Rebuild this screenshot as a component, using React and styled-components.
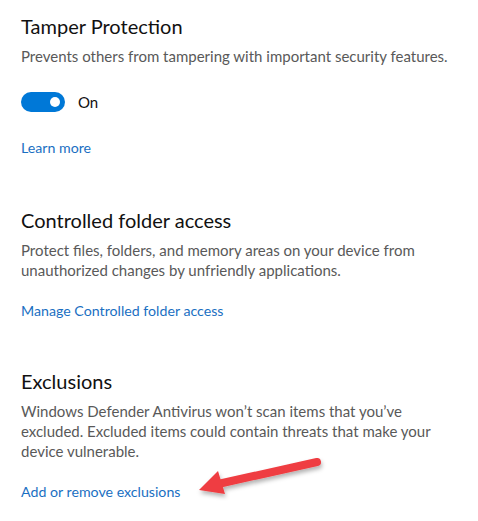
import React from 'react';
import styled, { createGlobalStyle } from 'styled-components';

const GlobalStyle = createGlobalStyle`
  html, body {
    margin: 0;
    padding: 0;
    background: #ffffff;
  }
  body {
    font-family: "Lato", "Noto Sans", sans-serif;
  }
`;

const Page = styled.div`
  position: relative;
  width: 478px;
  height: 521px;
  padding: 13px 21px 0 21px;
  box-sizing: border-box;
  overflow: hidden;
`;

const Section = styled.section`
  margin-bottom: ${(p) => p.gap || 0}px;
`;

const Title = styled.h2`
  margin: 0;
  font-size: 20px;
  line-height: 27px;
  font-weight: 400;
  color: #111111;
`;

const Desc = styled.p`
  margin: 6px 0 0 0;
  font-size: 15px;
  line-height: 20px;
  color: #595959;
`;

const ToggleRow = styled.div`
  display: flex;
  align-items: center;
  gap: 13px;
  margin-top: 26px;
`;

const Switch = styled.div`
  position: relative;
  width: 44px;
  height: 20px;
  border-radius: 10px;
  background: #0078d7;
  &::after {
    content: '';
    position: absolute;
    right: 5px;
    top: 5px;
    width: 10px;
    height: 10px;
    border-radius: 50%;
    background: #ffffff;
  }
`;

const ToggleLabel = styled.span`
  font-size: 15px;
  color: #111111;
`;

const Link = styled.a`
  display: block;
  margin-top: ${(p) => p.top}px;
  font-size: 14.2px;
  line-height: 20px;
  color: #1a6fc2;
  text-decoration: none;
`;

const Arrow = styled.svg`
  position: absolute;
  left: 190px;
  top: 450px;
  overflow: visible;
`;

export default function App() {
  return (
    <Page>
      <GlobalStyle />
      <Section gap={49}>
        <Title>Tamper Protection</Title>
        <Desc>Prevents others from tampering with important security features.</Desc>
        <ToggleRow>
          <Switch />
          <ToggleLabel>On</ToggleLabel>
        </ToggleRow>
        <Link top={26}>Learn more</Link>
      </Section>

      <Section gap={47}>
        <Title>Controlled folder access</Title>
        <Desc>
          Protect files, folders, and memory areas on your device from
          unauthorized changes by unfriendly applications.
        </Desc>
        <Link top={21}>Manage Controlled folder access</Link>
      </Section>

      <Section>
        <Title>Exclusions</Title>
        <Desc>
          Windows Defender Antivirus won’t scan items that you’ve excluded.
          Excluded items could contain threats that make your device
          vulnerable.
        </Desc>
        <Link top={21}>Add or remove exclusions</Link>
      </Section>

      <Arrow width="140" height="60" viewBox="0 0 140 60">
        <defs>
          <filter id="sh" x="-20%" y="-50%" width="140%" height="200%">
            <feDropShadow dx="1" dy="3" stdDeviation="2" floodColor="#000" floodOpacity="0.3" />
          </filter>
        </defs>
        <g filter="url(#sh)">
          <line x1="127" y1="12" x2="28" y2="34" stroke="#ef3e42" strokeWidth="8" strokeLinecap="round" />
          <polygon points="9,40 28,21 35,44" fill="#ef3e42" />
        </g>
      </Arrow>
    </Page>
  );
}
